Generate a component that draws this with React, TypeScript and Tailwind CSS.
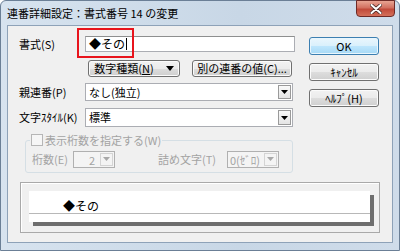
import type { ReactNode } from 'react';

function Btn({ children, className = '', primary = false }: { children: ReactNode; className?: string; primary?: boolean }) {
  return (
    <div
      className={
        'flex items-center justify-center rounded-[3px] border text-[11px] leading-none text-black ' +
        (primary
          ? 'border-[#3c7fb1] bg-[linear-gradient(#eaf6fd_0%,#d9f0fc_50%,#bee6fd_51%,#a7d9f5_100%)] shadow-[inset_0_0_0_1px_#e9f6fd] '
          : 'border-[#707070] bg-[linear-gradient(#f2f2f2_0%,#ebebeb_50%,#dddddd_51%,#cfcfcf_100%)] shadow-[inset_0_0_0_1px_#fbfbfb] ') +
        className
      }
    >
      {children}
    </div>
  );
}

function Arrow({ disabled = false }: { disabled?: boolean }) {
  return (
    <div
      className={
        'flex h-full w-[13px] items-center justify-center border ' +
        (disabled ? 'border-[#d4d4d4] bg-[#f4f4f4]' : 'border-[#9a9a9a] bg-[linear-gradient(#fafafa,#e4e4e4)]')
      }
    >
      <svg width="7" height="4" viewBox="0 0 7 4">
        <path d="M0 0h7L3.5 4z" fill={disabled ? '#a8a8a8' : '#000'} />
      </svg>
    </div>
  );
}

function Combo({ value, className = '' }: { value: string; className?: string }) {
  return (
    <div className={'flex items-stretch border border-[#abadb3] bg-white p-[1px] ' + className}>
      <span className="flex-1 pl-[2px] text-[11px] leading-[15px]">{value}</span>
      <Arrow />
    </div>
  );
}

function DisabledCombo({ value, className = '', right = false }: { value: string; className?: string; right?: boolean }) {
  return (
    <div className={'flex items-stretch border border-[#b0b0b0] bg-[#f4f4f4] p-[1px] ' + className}>
      <span className={'flex-1 text-[11px] leading-[14px] text-[#a3a3a3] ' + (right ? 'pr-[5px] text-right' : 'pl-[1px] text-[#8a8a8a]')}>
        {value}
      </span>
      <Arrow disabled />
    </div>
  );
}

export default function App() {
  return (
    <div className="relative flex h-[251px] w-[400px] flex-col rounded-t-[6px] border border-[#6b7f96] bg-[linear-gradient(90deg,#d7e3ef,#c8d7e6_60%,#cfdcea)] px-[6px] pb-[7px] text-black [font-family:'Noto_Sans_CJK_JP',sans-serif]">
      <div className="flex h-[24px] items-center text-[11px]">連番詳細設定：書式番号 14 の変更</div>
      <div className="absolute right-[4px] top-[-1px] flex h-[17px] w-[39px] items-center justify-center rounded-b-[4px] border border-[#6e2a26] bg-[linear-gradient(#e8a493_0%,#d27060_45%,#c14a3a_55%,#d4705a_100%)]">
        <svg width="12" height="10" viewBox="0 0 12 10">
          <path d="M1.5 1l9 8M10.5 1l-9 8" stroke="#4a2a26" strokeWidth="3.6" strokeLinecap="round" />
          <path d="M1.5 1l9 8M10.5 1l-9 8" stroke="#fff" strokeWidth="2" strokeLinecap="round" />
        </svg>
      </div>

      <div className="flex flex-1 flex-col border border-[#8ea2b8] bg-[#f0f0f0] pl-[11px] pt-[10px] text-[11px]">
        <div className="flex">
          <div className="flex w-[276px] flex-col">
            <div className="relative flex h-[16px] items-center">
              <span className="w-[66px]">書式(S)</span>
              <div className="flex h-[16px] w-[210px] items-center border border-[#abadb3] border-t-[#8e8f8f] bg-white pl-[3px] text-[12px] leading-none">
                ◆その<span className="ml-[1px] h-[12px] w-[1px] bg-black" />
              </div>
              <div className="absolute left-[58px] top-[-8px] h-[30px] w-[57px] border-2 border-[#e8141c]" />
            </div>

            <div className="mt-[8px] flex h-[17px] pl-[69px]">
              <Btn className="w-[92px] gap-[12px]">
                <span>
                  数字種類(<span className="underline">N</span>)
                </span>
                <svg width="8" height="5" viewBox="0 0 8 5">
                  <path d="M0 0h8L4 5z" fill="#000" />
                </svg>
              </Btn>
              <Btn className="ml-[12px] w-[100px]">別の連番の値(C)...</Btn>
            </div>

            <div className="mt-[6px] flex h-[18px] items-center">
              <span className="w-[66px]">親連番(P)</span>
              <Combo value="なし(独立)" className="h-[18px] w-[208px]" />
            </div>

            <div className="mt-[7px] flex h-[19px] items-center">
              <span className="w-[66px]">文字ｽﾀｲﾙ(K)</span>
              <Combo value="標準" className="h-[19px] w-[208px]" />
            </div>

            <fieldset className="ml-[6px] mt-[5px] h-[41px] w-[268px] rounded-[3px] border border-[#d5dfe5] px-[4px] text-[#a3a3a3]">
              <legend className="flex items-center px-[1px]">
                <span className="mr-[2px] h-[12px] w-[12px] border border-[#b6b6b6] bg-[#f6f6f6]" />
                <span>表示桁数を指定する(W)</span>
              </legend>
              <div className="mt-[2px] flex h-[17px] items-center pl-[2px]">
                <span className="w-[41px]">桁数(E)</span>
                <DisabledCombo value="2" right className="h-[17px] w-[42px]" />
                <span className="ml-[43px] w-[69px]">詰め文字(T)</span>
                <DisabledCombo value="0(ｾﾞﾛ)" className="h-[17px] w-[52px]" />
              </div>
            </fieldset>
          </div>

          <div className="ml-[14px] flex w-[70px] flex-col gap-[8px] pt-[1px]">
            <Btn primary className="h-[18px]">OK</Btn>
            <Btn className="h-[18px]">ｷｬﾝｾﾙ</Btn>
            <Btn className="h-[18px]">ﾍﾙﾌﾟ(H)</Btn>
          </div>
        </div>

        <div className="ml-[1px] mt-[9px] h-[51px] w-[360px] border border-[#a9a9a9] pl-[8px] pt-[8px] shadow-[inset_1px_1px_0_#fff]">
          <div className="flex h-[31px] w-[341px] flex-col bg-white shadow-[4px_4px_0_#6e6e6e]">
            <div className="flex h-[22px] items-end pl-[34px] text-[12px] leading-[14px]">◆その</div>
            <div className="h-[1px] w-full bg-[#b8b8b8]" />
          </div>
        </div>
      </div>
    </div>
  );
}
